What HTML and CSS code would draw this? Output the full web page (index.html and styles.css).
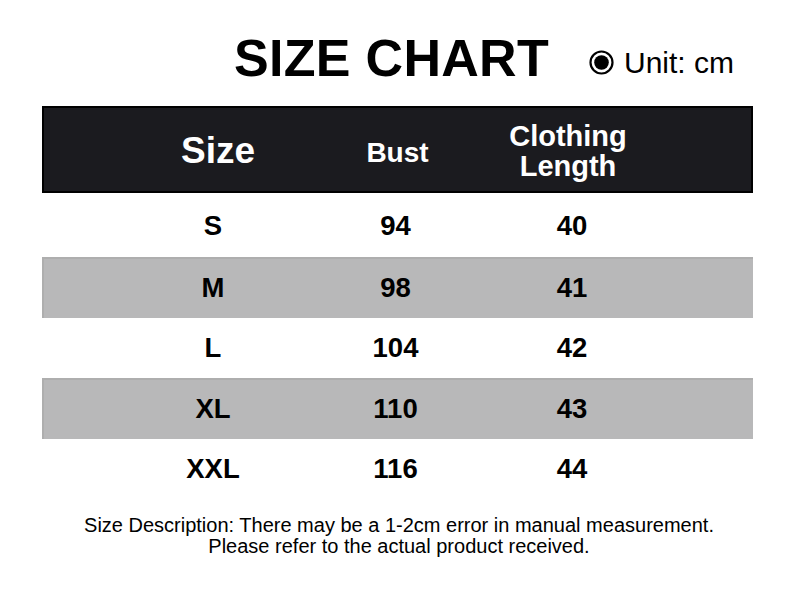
FILE: index.html
```html
<!DOCTYPE html>
<html lang="en">
<head>
<meta charset="utf-8">
<title>Size Chart</title>
<link rel="stylesheet" href="styles.css">
</head>
<body>
<div class="page">
  <header class="title-row">
    <h1 class="title">SIZE CHART</h1>
    <div class="unit">
      <svg class="unit-icon" width="25" height="25" viewBox="0 0 25 25" aria-hidden="true">
        <circle cx="12.5" cy="12.5" r="11" fill="none" stroke="#000" stroke-width="2.2"/>
        <circle cx="12.5" cy="12.5" r="7.3" fill="#000"/>
      </svg>
      <span>Unit: cm</span>
    </div>
  </header>

  <div class="table">
    <div class="row head">
      <div class="cell c1 h-size">Size</div>
      <div class="cell c2 h-bust">Bust</div>
      <div class="cell c3 h-len">Clothing<br>Length</div>
    </div>
    <div class="row first"><div class="cell c1">S</div><div class="cell c2">94</div><div class="cell c3">40</div></div>
    <div class="row alt"><div class="cell c1">M</div><div class="cell c2">98</div><div class="cell c3">41</div></div>
    <div class="row short"><div class="cell c1">L</div><div class="cell c2">104</div><div class="cell c3">42</div></div>
    <div class="row alt"><div class="cell c1">XL</div><div class="cell c2">110</div><div class="cell c3">43</div></div>
    <div class="row short"><div class="cell c1">XXL</div><div class="cell c2">116</div><div class="cell c3">44</div></div>
  </div>

  <p class="note">Size Description: There may be a 1-2cm error in manual measurement.<br>Please refer to the actual product received.</p>
</div>
</body>
</html>
```

FILE: styles.css
```css
* { box-sizing: border-box; }
html, body { margin: 0; padding: 0; background: #fff; }
body {
  font-family: "Liberation Sans", Arial, sans-serif;
  color: #000;
  width: 800px;
  height: 600px;
  overflow: hidden;
}
.page { padding-top: 28px; }

.title-row {
  display: flex;
  align-items: baseline;
  padding-left: 234px;
  height: 78px;
}
.title {
  margin: 0;
  font-size: 52px;
  line-height: 60px;
  font-weight: bold;
  letter-spacing: 0.3px;
}
.unit {
  display: flex;
  align-items: center;
  margin-left: 40px;
  font-size: 30px;
  line-height: 40px;
  gap: 10px;
  position: relative;
  top: -1px;
}
.unit-icon { display: block; }

.table {
  margin-left: 42px;
  width: 711px;
}
.row {
  display: grid;
  grid-template-columns: 200px 165px 188px;
  padding-left: 71px;
  height: 61px;
  align-items: center;
  font-weight: bold;
  font-size: 27.5px;
  padding-bottom: 1px;
}
.row.short { height: 60px; }
.row.first { height: 64px; padding-top: 3px; }
.row.alt {
  background: #b8b8b9;
  border-top: 2px solid #aeaeae;
  border-left: 2px solid #aeaeae;
  padding-left: 69px;
  padding-bottom: 2px;
}
.cell { text-align: center; }

.row.head {
  height: 87px;
  background: #1b1b1f;
  border: 2px solid #000;
  padding-left: 69px;
  color: #fff;
  padding-bottom: 0;
  padding-top: 2px;
}
.h-size { font-size: 37px; padding-left: 10px; }
.h-bust { font-size: 28px; padding-left: 4px; padding-top: 4px; }
.h-len { font-size: 29px; line-height: 30px; padding-right: 8px; }

.note {
  margin: 16px 0 0;
  text-align: center;
  font-size: 20px;
  line-height: 21px;
  padding-right: 2px;
}
```
